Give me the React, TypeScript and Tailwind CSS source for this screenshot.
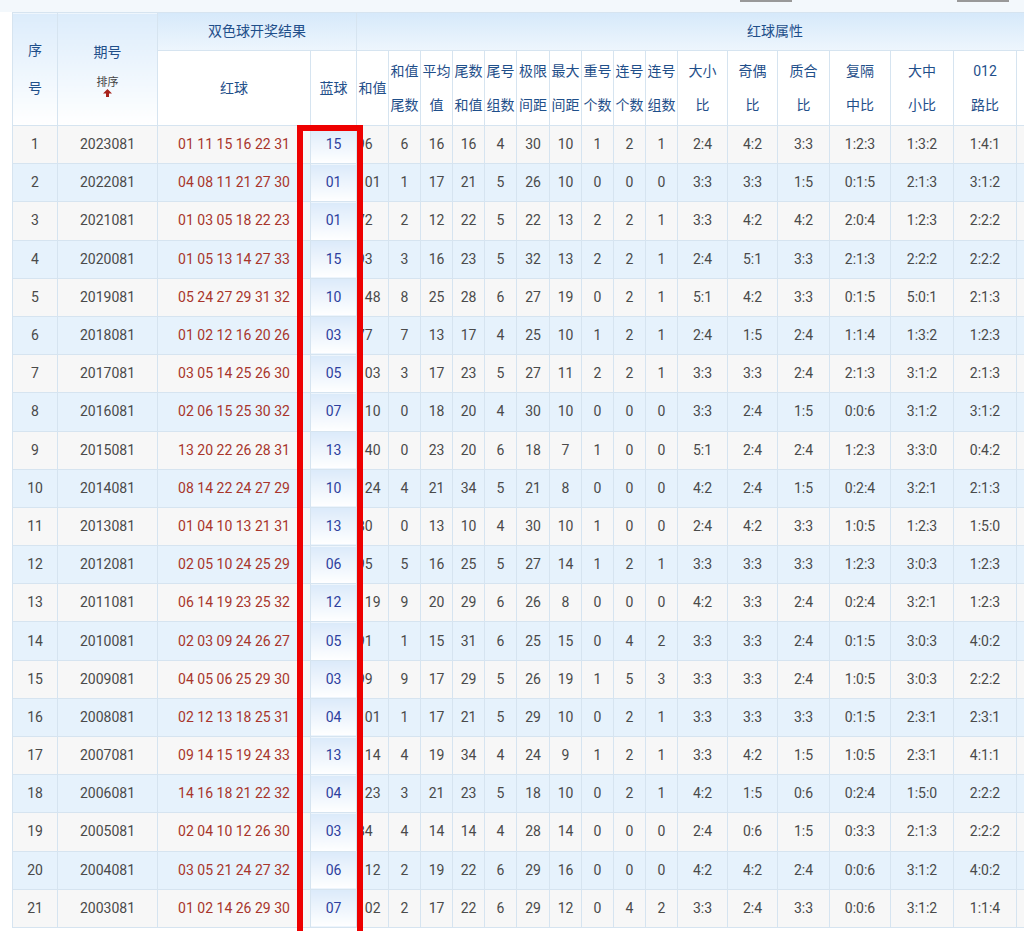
import React from "react";

const rows: string[][] = [
["1","2023081","01 11 15 16 22 31","15","96","6","16","16","4","30","10","1","2","1","2:4","4:2","3:3","1:2:3","1:3:2","1:4:1"],
["2","2022081","04 08 11 21 27 30","01","101","1","17","21","5","26","10","0","0","0","3:3","3:3","1:5","0:1:5","2:1:3","3:1:2"],
["3","2021081","01 03 05 18 22 23","01","72","2","12","22","5","22","13","2","2","1","3:3","4:2","4:2","2:0:4","1:2:3","2:2:2"],
["4","2020081","01 05 13 14 27 33","15","93","3","16","23","5","32","13","2","2","1","2:4","5:1","3:3","2:1:3","2:2:2","2:2:2"],
["5","2019081","05 24 27 29 31 32","10","148","8","25","28","6","27","19","0","2","1","5:1","4:2","3:3","0:1:5","5:0:1","2:1:3"],
["6","2018081","01 02 12 16 20 26","03","77","7","13","17","4","25","10","1","2","1","2:4","1:5","2:4","1:1:4","1:3:2","1:2:3"],
["7","2017081","03 05 14 25 26 30","05","103","3","17","23","5","27","11","2","2","1","3:3","3:3","2:4","2:1:3","3:1:2","2:1:3"],
["8","2016081","02 06 15 25 30 32","07","110","0","18","20","4","30","10","0","0","0","3:3","2:4","1:5","0:0:6","3:1:2","3:1:2"],
["9","2015081","13 20 22 26 28 31","13","140","0","23","20","6","18","7","1","0","0","5:1","2:4","2:4","1:2:3","3:3:0","0:4:2"],
["10","2014081","08 14 22 24 27 29","10","124","4","21","34","5","21","8","0","0","0","4:2","2:4","1:5","0:2:4","3:2:1","2:1:3"],
["11","2013081","01 04 10 13 21 31","13","80","0","13","10","4","30","10","1","0","0","2:4","4:2","3:3","1:0:5","1:2:3","1:5:0"],
["12","2012081","02 05 10 24 25 29","06","95","5","16","25","5","27","14","1","2","1","3:3","3:3","3:3","1:2:3","3:0:3","1:2:3"],
["13","2011081","06 14 19 23 25 32","12","119","9","20","29","6","26","8","0","0","0","4:2","3:3","2:4","0:2:4","3:2:1","1:2:3"],
["14","2010081","02 03 09 24 26 27","05","91","1","15","31","6","25","15","0","4","2","3:3","3:3","2:4","0:1:5","3:0:3","4:0:2"],
["15","2009081","04 05 06 25 29 30","03","99","9","17","29","5","26","19","1","5","3","3:3","3:3","2:4","1:0:5","3:0:3","2:2:2"],
["16","2008081","02 12 13 18 25 31","04","101","1","17","21","5","29","10","0","2","1","3:3","3:3","3:3","0:1:5","2:3:1","2:3:1"],
["17","2007081","09 14 15 19 24 33","13","114","4","19","34","4","24","9","1","2","1","3:3","4:2","1:5","1:0:5","2:3:1","4:1:1"],
["18","2006081","14 16 18 21 22 32","04","123","3","21","23","5","18","10","0","2","1","4:2","1:5","0:6","0:2:4","1:5:0","2:2:2"],
["19","2005081","02 04 10 12 26 30","03","84","4","14","14","4","28","14","0","0","0","2:4","0:6","1:5","0:3:3","2:1:3","2:2:2"],
["20","2004081","03 05 21 24 27 32","06","112","2","19","22","6","29","16","0","0","0","4:2","4:2","2:4","0:0:6","3:1:2","4:0:2"],
["21","2003081","01 02 14 26 29 30","07","102","2","17","22","6","29","12","0","4","2","3:3","2:4","3:3","0:0:6","3:1:2","1:1:4"],
];

const widths = [45,100,153,46,32,32,32,32,32,33,32,32,32,32,50,50,52,61,63,63,40];
const sub: [string,string][] = [["和值","尾数"],["平均","值"],["尾数","和值"],["尾号","组数"],["极限","间距"],["最大","间距"],["重号","个数"],["连号","个数"],["连号","组数"],["大小","比"],["奇偶","比"],["质合","比"],["复隔","中比"],["大中","小比"],["012","路比"]];
const bd = "border border-[#d6e4f0]";

export default function App() {
  return (
    <div className="relative w-[1024px] h-[931px] overflow-hidden bg-white" style={{fontFamily:'Roboto, "Noto Sans CJK SC", sans-serif'}}>
      <div className="h-[12px] bg-[#f3f8fc] flex items-start">
        <div className="ml-[740px] w-[52px] h-[2px] bg-[#999]" />
        <div className="ml-[165px] w-[52px] h-[2px] bg-[#999]" />
      </div>
      <table className="ml-[12px] border-collapse table-fixed text-[14px]" style={{width: widths.reduce((a,b)=>a+b,0)}}>
        <colgroup>{widths.map((w,i)=><col key={i} style={{width:w}} />)}</colgroup>
        <thead className="text-[#1f4f8a]">
          <tr className="h-[38px] bg-gradient-to-b from-[#d6e9fa] to-[#eef6fd]">
            <th rowSpan={2} className={`${bd} font-normal bg-gradient-to-b from-[#dcecfb] to-white leading-[38px]`}>序<br/>号</th>
            <th rowSpan={2} className={`${bd} font-normal bg-gradient-to-b from-[#dcecfb] to-white`}>
              <div>期号</div>
              <div className="text-[11px] text-[#444] mt-[14px] leading-none">排序</div>
              <div className="flex justify-center mt-[1px]">
                <svg width="9" height="8" viewBox="0 0 9 8"><path d="M4.5 0L9 4.5H6V8H3V4.5H0Z" fill="#a8221b"/></svg>
              </div>
            </th>
            <th colSpan={2} className={`${bd} font-normal`}>双色球开奖结果</th>
            <th colSpan={17} className={`${bd} font-normal text-left pl-[390px]`}>红球属性</th>
          </tr>
          <tr className="h-[75px] bg-white">
            <th className={`${bd} font-normal`}>红球</th>
            <th className={`${bd} font-normal`}>蓝球</th>
            <th className={`${bd} font-normal whitespace-nowrap`}>和值</th>
            {sub.map(([a,b],i)=>(
              <th key={i} className={`${bd} font-normal whitespace-nowrap leading-[34px]`}>{a}<br/>{b}</th>
            ))}
            <th className={bd}></th>
          </tr>
        </thead>
        <tbody className="text-[#4a4a4a]">
          {rows.map((r,ri)=>(
            <tr key={ri} className={`h-[38.2px] ${ri%2===0?"bg-[#f7f7f7]":"bg-[#e6f2fc]"}`}>
              {r.map((c,ci)=>(
                <td key={ci} className={`${bd} text-center whitespace-nowrap overflow-hidden ${ci===2?"text-[#a8352b]":""} ${ci===3?"text-[#2e3f9e] bg-gradient-to-b from-[#dbeafa] to-white":""} ${ci===4?"text-left":""}`}>{c}</td>
              ))}
              <td className={bd}></td>
            </tr>
          ))}
        </tbody>
      </table>
      <div className="absolute left-[297px] top-[125px] w-[66px] h-[812px] border-[6px] border-[#ee0000]" />
    </div>
  );
}
